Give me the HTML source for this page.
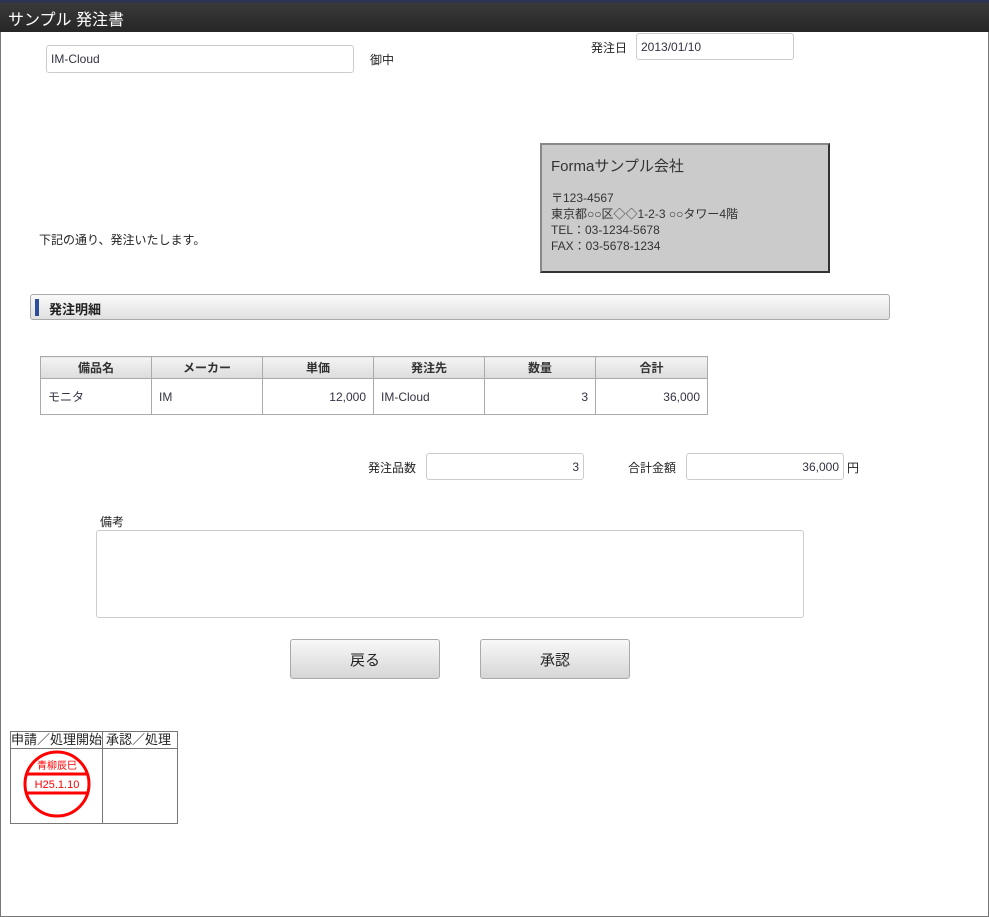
<!DOCTYPE html>
<html><head><meta charset="utf-8"><style>
*{box-sizing:border-box;margin:0;padding:0}
body{width:989px;height:917px;background:#fff;position:relative;overflow:hidden;font-family:"Liberation Sans","Noto Sans CJK JP",sans-serif;font-size:12px;color:#222}
.a{position:absolute}
.inp{position:absolute;border:1px solid #ccc;border-radius:3px;background:#fff;font-size:12px;color:#334;padding:0 4px;display:flex;align-items:center}
.r{justify-content:flex-end}
table{border-collapse:collapse}
.t{table-layout:fixed}
.t td,.t th{border:1px solid #aaa;font-size:12px}
.t th{height:22px;background:linear-gradient(#f4f4f4,#dcdcdc);font-weight:bold;color:#333}
.t td{height:36px;padding:0 7px;color:#334}
.btn{position:absolute;width:150px;height:40px;border:1px solid #aaa;border-radius:3px;background:linear-gradient(#f8f8f8,#d6d6d6);font-size:15px;display:flex;align-items:center;justify-content:center;color:#222}
</style></head><body>
<div class="a" style="left:0;top:0;width:989px;height:917px;border:1px solid #777;border-top:none"></div>
<div class="a" style="left:0;top:0;width:989px;height:3px;background:#2d3550"></div>
<div class="a" style="left:0;top:3px;width:989px;height:29px;background:linear-gradient(#3a3a3a,#262626);color:#fff;font-size:16px;padding:3px 0 0 8px">サンプル 発注書</div>
<div class="inp" style="left:46px;top:45px;width:308px;height:28px">IM-Cloud</div>
<div class="a" style="left:370px;top:51px">御中</div>
<div class="a" style="left:591px;top:39px">発注日</div>
<div class="inp" style="left:636px;top:33px;width:158px;height:27px">2013/01/10</div>
<div class="a" style="left:540px;top:143px;width:290px;height:130px;background:#cbcbcb;border:2px solid;border-color:#888 #333 #333 #888;padding:10px 9px;color:#333">
<div style="font-size:15px;margin-bottom:14px">Formaサンプル会社</div>
<div style="line-height:16px">〒123-4567<br>東京都○○区◇◇1-2-3 ○○タワー4階<br>TEL：03-1234-5678<br>FAX：03-5678-1234</div></div>
<div class="a" style="left:39px;top:231px">下記の通り、発注いたします。</div>
<div class="a" style="left:30px;top:294px;width:860px;height:26px;border:1px solid #aaa;border-radius:3px;background:linear-gradient(#fafafa,#e0e0e0)"><div class="a" style="left:4px;top:4px;width:4px;height:17px;background:#2c4d9a"></div><div class="a" style="left:18px;top:4px;font-weight:bold;font-size:13px">発注明細</div></div>
<table class="t a" style="left:40px;top:356px;width:667px">
<colgroup><col style="width:111px"><col style="width:111px"><col style="width:111px"><col style="width:111px"><col style="width:111px"><col style="width:112px"></colgroup>
<tr><th>備品名</th><th>メーカー</th><th>単価</th><th>発注先</th><th>数量</th><th>合計</th></tr>
<tr><td>モニタ</td><td>IM</td><td style="text-align:right">12,000</td><td>IM-Cloud</td><td style="text-align:right">3</td><td style="text-align:right">36,000</td></tr></table>
<div class="a" style="left:368px;top:459px">発注品数</div>
<div class="inp r" style="left:426px;top:453px;width:158px;height:27px">3</div>
<div class="a" style="left:628px;top:459px">合計金額</div>
<div class="inp r" style="left:686px;top:453px;width:158px;height:27px">36,000</div>
<div class="a" style="left:847px;top:459px">円</div>
<div class="a" style="left:100px;top:513px">備考</div>
<div class="inp" style="left:96px;top:530px;width:708px;height:88px"></div>
<div class="btn" style="left:290px;top:639px">戻る</div>
<div class="btn" style="left:480px;top:639px">承認</div>
<div class="a" style="left:10px;top:731px;width:168px;height:93px;border:1px solid #777"></div>
<div class="a" style="left:10px;top:748px;width:168px;height:1px;background:#777"></div>
<div class="a" style="left:102px;top:731px;width:1px;height:93px;background:#777"></div>
<div class="a" style="left:11px;top:731px;font-size:13px;line-height:18px;white-space:nowrap">申請／処理開始</div>
<div class="a" style="left:106px;top:731px;font-size:13px;line-height:18px;white-space:nowrap">承認／処理</div>
<svg class="a" style="left:22px;top:750px" width="70" height="70"><circle cx="35" cy="34" r="32" fill="none" stroke="#f00" stroke-width="3"/><line x1="4" y1="24" x2="66" y2="24" stroke="#f00" stroke-width="3"/><line x1="4" y1="43" x2="66" y2="43" stroke="#f00" stroke-width="3"/><text x="35" y="19" fill="#f00" font-size="10" text-anchor="middle" font-family="Liberation Sans,Noto Sans CJK JP,sans-serif">青柳辰巳</text><text x="35" y="38" fill="#f00" font-size="11" text-anchor="middle" font-family="Liberation Sans,sans-serif">H25.1.10</text></svg>
</body></html>
